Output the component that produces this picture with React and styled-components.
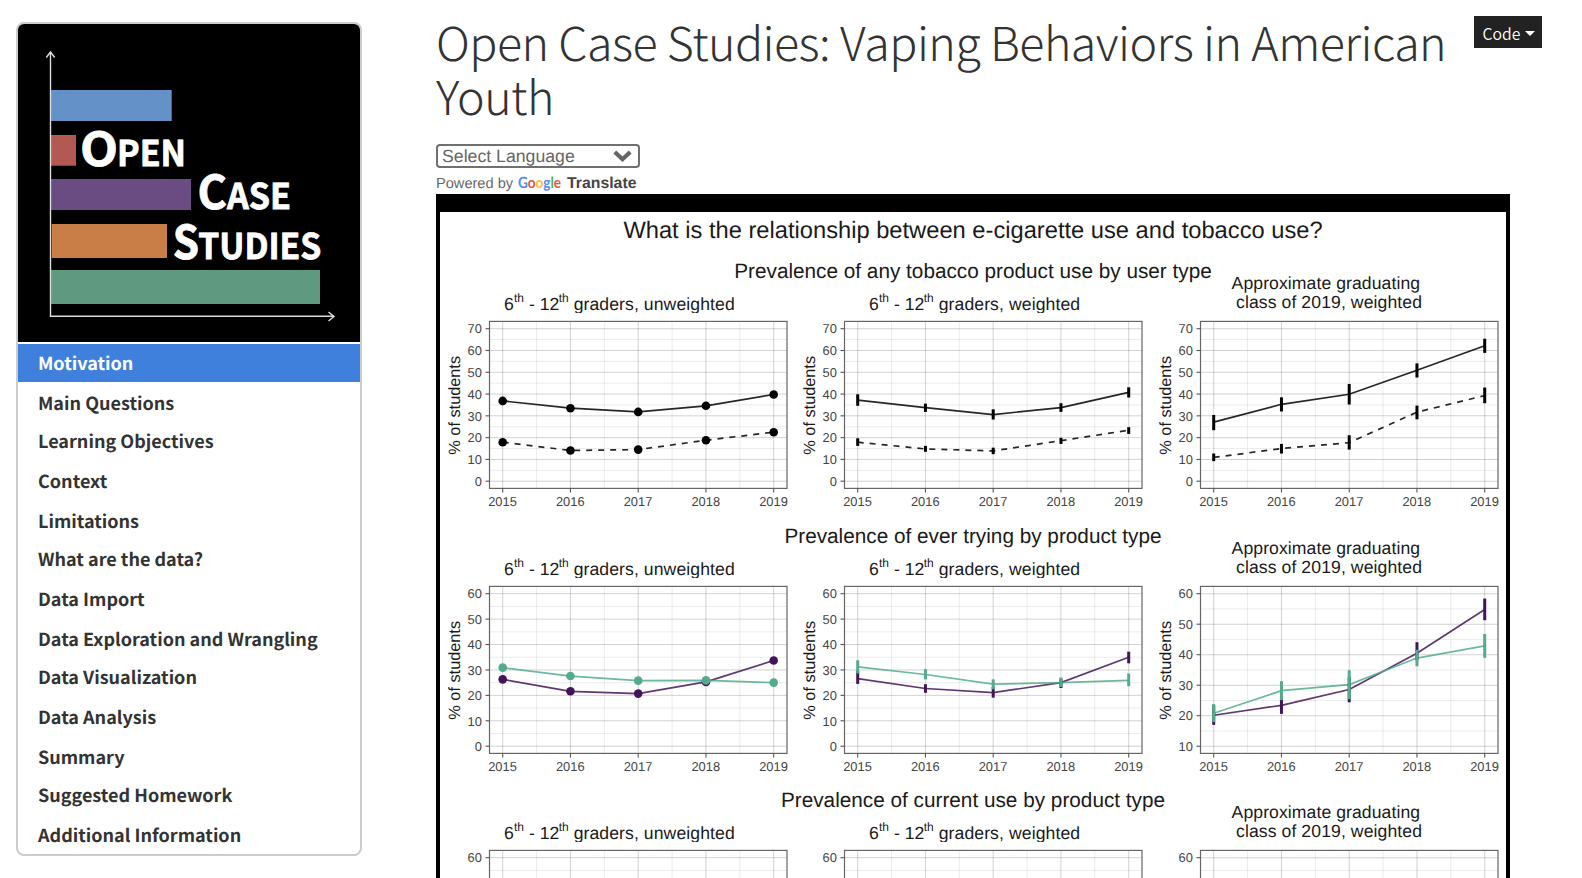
import React from "react";
import styled, { createGlobalStyle, css } from "styled-components";

const SOURCE = `"Source Sans Pro", "Noto Sans CJK SC", "Open Sans", sans-serif`;
const ARIAL = `"Liberation Sans", Arial, sans-serif`;

const GlobalStyle = createGlobalStyle`
  *, *::before, *::after { box-sizing: border-box; }
  body { margin: 0; background: #fff; color: #333; font-family: ${SOURCE}; text-rendering: geometricPrecision; }
`;

const Page = styled.div`
  display: flex;
  align-items: flex-start;
  width: 1582px;
  height: 878px;
  overflow: hidden;
`;

/* ---------- sidebar ---------- */

const Sidebar = styled.nav`
  flex: none;
  width: 346px;
  margin: 22px 0 0 16px;
  border: 2px solid #ccc;
  border-radius: 8px;
  overflow: hidden;
`;

const LogoArt = styled.svg`
  display: block;
  width: 342px;
  height: 318px;
  margin-bottom: 2px;
  background: #000;
`;

const LogoWord = styled.text`
  font-family: ${SOURCE};
  font-weight: 700;
  fill: #fff;
  stroke: #fff;
  stroke-width: 0.8px;
`;

const TocList = styled.ul`
  list-style: none;
  margin: 0;
  padding: 0;
`;

const TocItem = styled.li`
  height: 38px;
  margin-bottom: 2px;
  padding-left: 20px;
  font-size: 18.03px;
  font-weight: 700;
  line-height: 38px;
  color: #333;
  white-space: nowrap;
  &:nth-child(3n + 2),
  &:last-child {
    margin-bottom: 0;
  }
  ${(p) =>
    p.$active &&
    css`
      background: #3f80dd;
      color: #fff;
    `}
`;

/* ---------- main column ---------- */

const Main = styled.main`
  flex: none;
  width: 1106px;
  margin-left: 74px;
`;

const Header = styled.header`
  display: flex;
  justify-content: space-between;
  align-items: flex-start;
  height: 144px;
`;

const Title = styled.h1`
  width: 1032px;
  margin: 15px 0 0;
  font-size: 46.6px;
  font-weight: 200;
  line-height: 54px;
  letter-spacing: -0.53px;
  color: #333;
`;

const CodeButton = styled.button`
  display: flex;
  align-items: center;
  justify-content: center;
  gap: 5px;
  flex: none;
  width: 68px;
  height: 32px;
  margin-top: 16px;
  padding: 3px 0 0 2px;
  border: 0;
  background: #222;
  color: #fff;
  font: 350 15.8px/29px ${SOURCE};
`;

const Caret = styled.span`
  margin-top: -1px;
  border: 5px solid transparent;
  border-top-color: #fff;
  border-bottom: 0;
`;

const LanguageSelect = styled.div`
  display: flex;
  align-items: center;
  justify-content: space-between;
  width: 204px;
  height: 24px;
  padding: 0 6px 0 4px;
  border: 2px solid #707070;
  border-radius: 4px;
  font: 17.7px/20px ${ARIAL};
  color: #666;
`;

const Powered = styled.div`
  display: flex;
  align-items: baseline;
  height: 26px;
  padding-top: 7px;
  font: 14.6px/18px ${ARIAL};
  color: #666;
  white-space: nowrap;
`;

const GoogleMark = styled.svg`
  width: 44px;
  height: 18px;
  margin: -1px 5px 0 5px;
  align-self: flex-start;
  overflow: visible;
  font: 700 15.5px Lato, sans-serif;
`;

const TranslateLabel = styled.b`
  font-size: 15.8px;
  color: #444;
`;

/* ---------- figure ---------- */

const Figure = styled.figure`
  width: 1074px;
  height: 900px;
  margin: 0;
  border: solid #000;
  border-width: 18px 4px 4px;
  font-family: ${ARIAL};
  color: #1a1a1a;
`;

const FigureTitle = styled.h2`
  height: 41px;
  margin: 0;
  padding-top: 6px;
  font-size: 23.7px;
  font-weight: 400;
  line-height: 26px;
  text-align: center;
`;

const PlotRow = styled.section`
  height: 264.7px;
`;

const RowTitle = styled.h3`
  height: 27px;
  margin: 0;
  padding-top: 6px;
  font-size: 20.75px;
  font-weight: 400;
  line-height: 26px;
  text-align: center;
`;

const PanelGrid = styled.div`
  display: grid;
  grid-template-columns: repeat(3, 1fr);
`;

const Plot = styled.svg`
  display: block;
  width: 100%;
  height: 237px;
  overflow: visible;
  font-family: ${ARIAL};
`;

const PanelTitle = styled.text`
  font-size: 17.6px;
  fill: #1a1a1a;
`;

const Ordinal = styled(PanelTitle)`
  font-size: 12px;
`;

const AxisTitle = styled(PanelTitle)`
  font-size: 16.3px;
`;

const TickText = styled.text`
  font-size: 12.9px;
  fill: #444;
`;

const BOX = { left: 49.5, right: 347, top: 0, bottom: 167 };
const YEARS = [2015, 2016, 2017, 2018, 2019];
const xAt = (i) => 62.7 + i * 67.75;

const BLACK = "#000";
const PURPLE = "#42145a";
const GREEN = "#52ab8b";

const ROWS = [
  {
    title: "Prevalence of any tobacco product use by user type",
    panels: [
      {
        min: 0, max: 70,
        series: [
          { color: BLACK, dots: true, v: [36.85, 33.5, 31.8, 34.6, 39.8] },
          { color: BLACK, dots: true, dash: true, v: [17.9, 14.1, 14.5, 18.8, 22.5] },
        ],
      },
      {
        min: 0, max: 70,
        series: [
          { color: BLACK, v: [37.2, 33.8, 30.6, 33.8, 40.8], r: [[34.6, 39.9], [31.8, 35.6], [28.3, 33], [31.8, 35.8], [38.4, 43.1]] },
          { color: BLACK, dash: true, v: [17.9, 14.8, 13.9, 18.6, 23.4], r: [[16.2, 19.7], [13.5, 16.2], [12.4, 15.4], [17.1, 19.9], [21.7, 24.8]] },
        ],
      },
      {
        min: 0, max: 70,
        series: [
          { color: BLACK, v: [27.1, 35.3, 39.9, 50.9, 62.2], r: [[23.4, 30.4], [32, 38.5], [35.2, 44.6], [47.6, 54.1], [58.9, 65.4]] },
          { color: BLACK, dash: true, v: [10.9, 15, 17.7, 31.7, 39.3], r: [[9.2, 12.7], [12.7, 17.1], [14.5, 21.1], [28.4, 34.7], [35.8, 43]] },
        ],
      },
    ],
  },
  {
    title: "Prevalence of ever trying by product type",
    panels: [
      {
        min: 0, max: 60,
        series: [
          { color: PURPLE, dots: true, v: [26.3, 21.6, 20.7, 25.3, 33.7] },
          { color: GREEN, dots: true, v: [30.9, 27.6, 25.8, 25.9, 25] },
        ],
      },
      {
        min: 0, max: 60,
        series: [
          { color: PURPLE, v: [26.6, 22.7, 21.1, 25, 35], r: [[24.5, 29.6], [21, 24.4], [19.1, 23.3], [22.9, 26.6], [32.6, 37.2]] },
          { color: GREEN, v: [31.2, 28.2, 24.4, 25, 25.9], r: [[28.6, 33.8], [26.3, 30.3], [22.4, 26.3], [23.3, 27], [23.6, 28.6]] },
        ],
      },
      {
        min: 10, max: 60,
        series: [
          { color: PURPLE, v: [20.15, 23.4, 28.6, 40.5, 54.8], r: [[17, 23.4], [20.6, 26.7], [24.4, 32.7], [38.2, 44.1], [51.3, 58.4]] },
          { color: GREEN, v: [20.8, 28.2, 30.2, 38.9, 42.9], r: [[17.9, 23.8], [25.1, 31.3], [25.4, 34.9], [36.2, 41.6], [39, 46.8]] },
        ],
      },
    ],
  },
  {
    title: "Prevalence of current use by product type",
    panels: [
      { min: 0, max: 60, series: [] },
      { min: 0, max: 60, series: [] },
      { min: 0, max: 60, series: [] },
    ],
  },
];

function GradersTitle({ x, width, word, id }) {
  return (
    <g clipPath={`url(#${id})`}>
      <clipPath id={id}>
        <rect x="0" y="-40" width="355" height="31.6" />
      </clipPath>
      <PanelTitle x={x} y="-11.3">6</PanelTitle>
      <Ordinal x={x + 9.9} y="-19.8">th</Ordinal>
      <PanelTitle x={x + 25} y="-11.3">- 12</PanelTitle>
      <Ordinal x={x + 54.6} y="-19.8">th</Ordinal>
      <PanelTitle x={x + 69.6} y="-11.3" textLength={width}>graders, {word}</PanelTitle>
    </g>
  );
}

function Panel({ min, max, series, column, row }) {
  const yAt = (v) => 7.3 + ((max - v) / (max - min)) * 152.5;
  const ticks = [];
  for (let t = min; t <= max; t += 10) ticks.push(t);
  return (
    <Plot viewBox="0 -41.4 355.33 237" preserveAspectRatio="none">
      {column === 0 && <GradersTitle id={`c${row}0`} x={64.1} width={161} word="unweighted" />}
      {column === 1 && <GradersTitle id={`c${row}1`} x={74.1} width={141.4} word="weighted" />}
      {column === 2 && (
        <>
          <PanelTitle x="80.6" y="-32.8" textLength="188.5">Approximate graduating</PanelTitle>
          <PanelTitle x="85" y="-13.4" textLength="186">class of 2019, weighted</PanelTitle>
        </>
      )}
      <g stroke="#000" strokeOpacity="0.09" strokeWidth="0.9">
        {ticks.map((t) => {
          const y = yAt(t - 5);
          return y < BOX.bottom ? <line key={t} x1={BOX.left} x2={BOX.right} y1={y} y2={y} /> : null;
        })}
        {[0, 1, 2, 3].map((i) => (
          <line key={i} x1={xAt(i + 0.5)} x2={xAt(i + 0.5)} y1={BOX.top} y2={BOX.bottom} />
        ))}
      </g>
      <g stroke="#000" strokeOpacity="0.18" strokeWidth="1">
        {ticks.map((t) => (
          <line key={t} x1={BOX.left} x2={BOX.right} y1={yAt(t)} y2={yAt(t)} />
        ))}
        {YEARS.map((y, i) => (
          <line key={y} x1={xAt(i)} x2={xAt(i)} y1={BOX.top} y2={BOX.bottom} />
        ))}
      </g>
      {series.map((s, k) => (
        <g key={k}>
          <polyline
            points={s.v.map((v, i) => `${xAt(i)},${yAt(v)}`).join(" ")}
            fill="none"
            stroke={s.color}
            strokeOpacity="0.85"
            strokeWidth="1.7"
            strokeDasharray={s.dash ? "6 6" : undefined}
          />
          {s.dots && s.v.map((v, i) => <circle key={i} cx={xAt(i)} cy={yAt(v)} r="4.3" fill={s.color} />)}
        </g>
      ))}
      {series.map((s, k) =>
        s.r
          ? s.r.map(([lo, hi], i) => (
              <line key={`${k}-${i}`} x1={xAt(i)} x2={xAt(i)} y1={yAt(hi)} y2={yAt(lo)} stroke={s.color} strokeWidth="3" />
            ))
          : null
      )}
      <rect x={BOX.left} y={BOX.top} width={BOX.right - BOX.left} height={BOX.bottom} fill="none" stroke="#666" strokeWidth="1.2" />
      <g stroke="#555" strokeWidth="1.1">
        {ticks.map((t) => (
          <line key={t} x1={BOX.left - 4} x2={BOX.left} y1={yAt(t)} y2={yAt(t)} />
        ))}
        {YEARS.map((y, i) => (
          <line key={y} x1={xAt(i)} x2={xAt(i)} y1={BOX.bottom} y2={BOX.bottom + 4} />
        ))}
      </g>
      {ticks.map((t) => (
        <TickText key={t} x="41.9" y={yAt(t) + 4.8} textAnchor="end">{t}</TickText>
      ))}
      {YEARS.map((y, i) => (
        <TickText key={y} x={xAt(i) - 0.2} y="184.4" textAnchor="middle">{y}</TickText>
      ))}
      <AxisTitle transform="translate(19.6 83.9) rotate(-90)" textAnchor="middle">% of students</AxisTitle>
    </Plot>
  );
}

const BARS = [
  { x: 51, y: 90, w: 120.7, h: 31, c: "#6391c8" },
  { x: 51, y: 135, w: 25, h: 30.7, c: "#b25a52" },
  { x: 51, y: 179, w: 140, h: 31, c: "#6b4c82" },
  { x: 51.7, y: 224, w: 115.3, h: 34, c: "#c97e47" },
  { x: 51, y: 270, w: 269, h: 34, c: "#5f9980" },
];

const WORDS = [
  { y: 166.2, cap: "O", cx: 80, cw: 38, rest: "PEN", rx: 117, rw: 69 },
  { y: 208.6, cap: "C", cx: 197.5, cw: 29.5, rest: "ASE", rx: 227, rw: 64 },
  { y: 259, cap: "S", cx: 172.7, cw: 26.3, rest: "TUDIES", rx: 198.3, rw: 123 },
];

function Logo() {
  return (
    <LogoArt viewBox="18 24 342 318">
      {BARS.map((b) => (
        <rect key={b.c} x={b.x} y={b.y} width={b.w} height={b.h} fill={b.c} />
      ))}
      <g fill="none" stroke="#ddd" strokeWidth="1.4">
        <path d="M50.5 52V316.3H334" />
        <path d="M46.3 57.5L50.5 52L54.7 57.5" />
        <path d="M328.5 312L334 316.6L328.5 321" />
      </g>
      {WORDS.map((w) => (
        <g key={w.rest}>
          <LogoWord x={w.cx} y={w.y} fontSize="46.5" textLength={w.cw} lengthAdjust="spacingAndGlyphs">{w.cap}</LogoWord>
          <LogoWord x={w.rx} y={w.y} fontSize="35.3" textLength={w.rw} lengthAdjust="spacingAndGlyphs">{w.rest}</LogoWord>
        </g>
      ))}
    </LogoArt>
  );
}

const TOC = [
  "Motivation",
  "Main Questions",
  "Learning Objectives",
  "Context",
  "Limitations",
  "What are the data?",
  "Data Import",
  "Data Exploration and Wrangling",
  "Data Visualization",
  "Data Analysis",
  "Summary",
  "Suggested Homework",
  "Additional Information",
];

export default function App() {
  return (
    <>
      <GlobalStyle />
      <Page>
        <Sidebar>
          <Logo />
          <TocList>
            {TOC.map((t, i) => (
              <TocItem key={t} $active={i === 0}>{t}</TocItem>
            ))}
          </TocList>
        </Sidebar>
        <Main>
          <Header>
            <Title>Open Case Studies: Vaping Behaviors in American Youth</Title>
            <CodeButton>
              Code
              <Caret />
            </CodeButton>
          </Header>
          <LanguageSelect>
            Select Language
            <svg width="19" height="12" viewBox="0 0 19 12">
              <path d="M1.8 2L9.5 9.2L17.2 2" fill="none" stroke="#666" strokeWidth="4.2" />
            </svg>
          </LanguageSelect>
          <Powered>
            Powered by
            <GoogleMark viewBox="0 0 44 18">
              <text x="0" y="14" textLength="43" lengthAdjust="spacingAndGlyphs">
                <tspan fill="#4f8bf5">G</tspan>
                <tspan fill="#ea5548">o</tspan>
                <tspan fill="#f9c02d">o</tspan>
                <tspan fill="#4f8bf5">g</tspan>
                <tspan fill="#4bae62">l</tspan>
                <tspan fill="#ea5548">e</tspan>
              </text>
            </GoogleMark>
            <TranslateLabel>Translate</TranslateLabel>
          </Powered>
          <Figure>
            <FigureTitle>What is the relationship between e-cigarette use and tobacco use?</FigureTitle>
            {ROWS.map((r, i) => (
              <PlotRow key={r.title}>
                <RowTitle>{r.title}</RowTitle>
                <PanelGrid>
                  {r.panels.map((p, c) => (
                    <Panel key={c} {...p} column={c} row={i} />
                  ))}
                </PanelGrid>
              </PlotRow>
            ))}
          </Figure>
        </Main>
      </Page>
    </>
  );
}
